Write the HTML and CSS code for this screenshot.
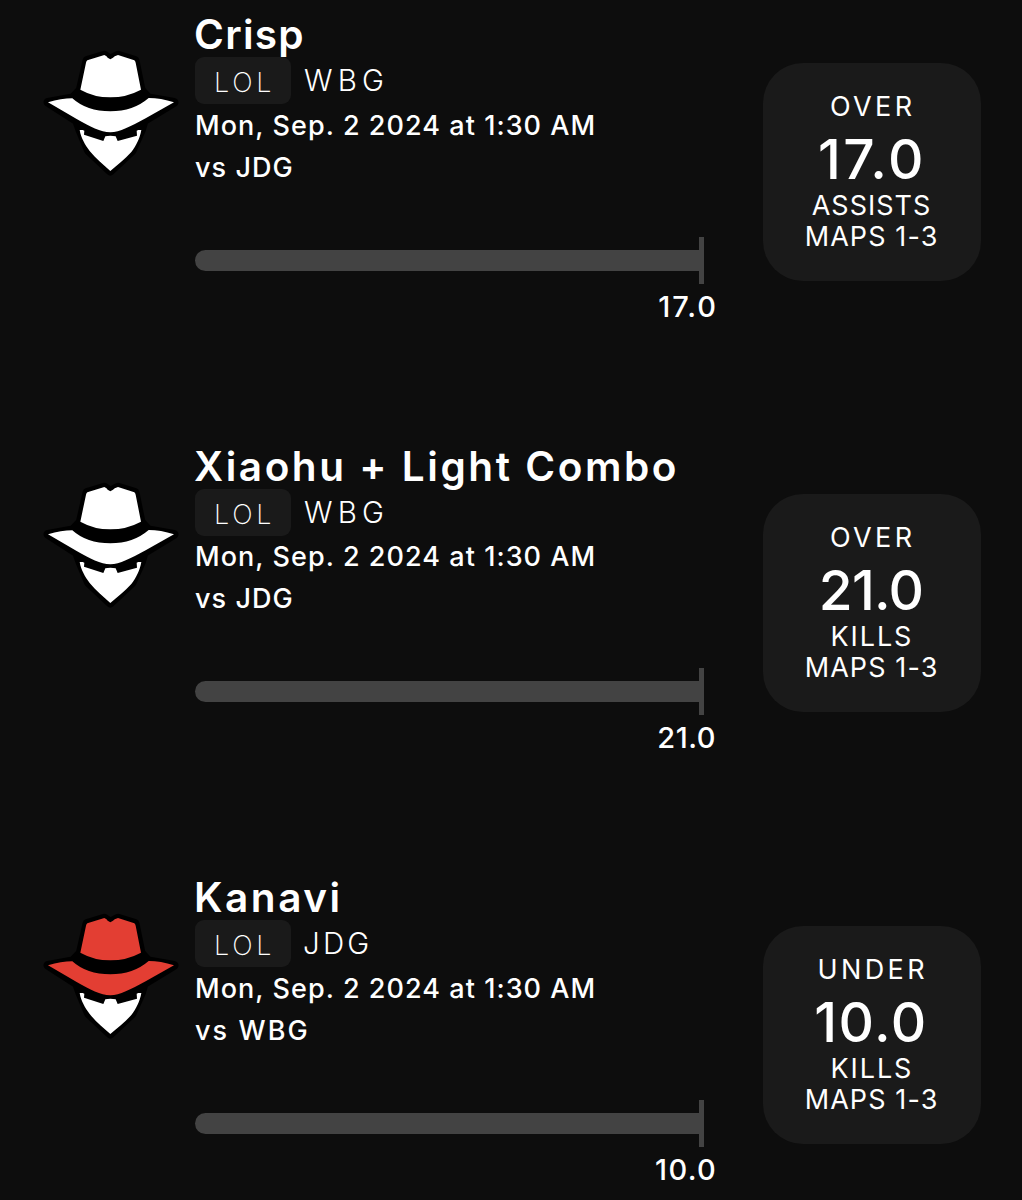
FILE: index.html
```html
<!DOCTYPE html>
<html lang="en">
<head>
    <meta charset="UTF-8">
    <meta name="viewport" content="width=device-width, initial-scale=1.0">
    <title>Picks</title>
    <link rel="stylesheet" href="styles.css">
</head>
<body>
    <svg class="defs" width="0" height="0">
        <symbol id="bandit" viewBox="0 0 480 450">
            <path class="outline" d="M223 46L171 62L151 150L128 174L54 187L140 242L150 270L176 332L241 393L306 332L334 270L342 242L432 187L355 174L333 150L315 62L264 46L241 58Z"/>
            <path class="hat" d="M223 45Q231 48 233 53L241 58L249 53Q252 48 264 45L313 61Q316 63 317 68L333 149Q290 172 241 172Q192 172 151 149L168 68Q169 63 172 61Z"/>
            <path class="hat" d="M54 187Q94 175 127 175Q170 214 241 214Q310 214 356 174Q392 174 432 187L347 235C300 260 270 277 241 277C212 277 180 259 140 237Z"/>
            <path class="mask" d="M149 270H158L163 272L162 284L220 303L226 289L241 287L257 289L263 303L321 287L320 272L325 270H334C330 294 318 318 304 336C284 359 262 374 241 393C220 374 198 357 179 333C165 314 153 294 149 270Z"/>
        </symbol>
    </svg>

    <main class="picks">
        <section class="pick">
            <svg class="avatar"><use href="#bandit"/></svg>
            <div class="info">
                <h2 class="name short">Crisp</h2>
                <div class="team-row">
                    <span class="league">LOL</span>
                    <span class="team wbg">WBG</span>
                </div>
                <p class="line">Mon, Sep. 2 2024 at 1:30 AM</p>
                <p class="line">vs JDG</p>
                <div class="progress">
                    <div class="bar"></div>
                    <div class="tick"></div>
                </div>
                <p class="target n17">17.0</p>
            </div>
            <div class="card">
                <span class="side">OVER</span>
                <span class="number n17">17.0</span>
                <span class="stat assists">ASSISTS</span>
                <span class="stat maps">MAPS 1-3</span>
            </div>
        </section>

        <section class="pick">
            <svg class="avatar"><use href="#bandit"/></svg>
            <div class="info">
                <h2 class="name">Xiaohu + Light Combo</h2>
                <div class="team-row">
                    <span class="league">LOL</span>
                    <span class="team wbg">WBG</span>
                </div>
                <p class="line">Mon, Sep. 2 2024 at 1:30 AM</p>
                <p class="line">vs JDG</p>
                <div class="progress">
                    <div class="bar"></div>
                    <div class="tick"></div>
                </div>
                <p class="target n21">21.0</p>
            </div>
            <div class="card">
                <span class="side">OVER</span>
                <span class="number n21">21.0</span>
                <span class="stat">KILLS</span>
                <span class="stat maps">MAPS 1-3</span>
            </div>
        </section>

        <section class="pick">
            <svg class="avatar red"><use href="#bandit"/></svg>
            <div class="info">
                <h2 class="name">Kanavi</h2>
                <div class="team-row">
                    <span class="league">LOL</span>
                    <span class="team">JDG</span>
                </div>
                <p class="line">Mon, Sep. 2 2024 at 1:30 AM</p>
                <p class="line vs-wbg">vs WBG</p>
                <div class="progress">
                    <div class="bar"></div>
                    <div class="tick"></div>
                </div>
                <p class="target">10.0</p>
            </div>
            <div class="card">
                <span class="side">UNDER</span>
                <span class="number">10.0</span>
                <span class="stat">KILLS</span>
                <span class="stat maps">MAPS 1-3</span>
            </div>
        </section>
    </main>
</body>
</html>
```
FILE: styles.css
```css
* {
    margin: 0;
    padding: 0;
    box-sizing: border-box;
}

body {
    background: #0d0d0d;
    color: #fff;
    font-family: 'Inter', sans-serif;
    overflow: hidden;
}

.defs {
    display: block;
}

.picks {
    height: 1200px;
    overflow: hidden;
}

.pick {
    display: flex;
    align-items: flex-start;
    height: 431.5px;
    padding-left: 30px;
}

/* avatar */
.avatar {
    width: 160px;
    height: 150px;
    margin-top: 40px;
    margin-right: 5px;
    flex-shrink: 0;
    color: #fff;
}

.avatar.red {
    color: #e33e33;
}

.outline {
    fill: #000;
    stroke: #000;
    stroke-width: 27;
    stroke-linejoin: round;
}

.hat {
    fill: currentColor;
}

.mask {
    fill: #fff;
}

/* player info */
.info {
    width: 521px;
    padding-top: 13px;
    flex-shrink: 0;
}

.name {
    margin-left: -1px;
    font-size: 40.5px;
    font-weight: 600;
    line-height: 44px;
    letter-spacing: 2.55px;
    white-space: nowrap;
}

.name.short {
    letter-spacing: 1.3px;
}

.team-row {
    display: flex;
    gap: 13px;
    height: 47px;
    margin-bottom: 0.6px;
}

.league {
    width: 96px;
    padding: 5px 0 0 19px;
    border-radius: 9px;
    background: #1a1a1a;
    font-size: 27px;
    font-weight: 200;
    line-height: 42px;
    letter-spacing: 3.7px;
}

.team {
    margin-left: -1px;
    font-size: 29.5px;
    font-weight: 300;
    line-height: 46px;
    letter-spacing: 3.2px;
}

.team.wbg {
    margin-left: 0;
    letter-spacing: 5.2px;
}

.line {
    font-size: 27px;
    font-weight: 450;
    line-height: 42px;
    letter-spacing: 1.05px;
}

.line.vs-wbg {
    letter-spacing: 2.1px;
}

.progress {
    display: flex;
    align-items: center;
    margin-top: 48px;
    height: 47px;
}

.bar {
    width: 504px;
    height: 21px;
    border-radius: 10.5px 0 0 10.5px;
    background: #434343;
}

.tick {
    width: 5px;
    height: 47px;
    background: #434343;
}

.target {
    margin-top: 5px;
    margin-right: -1px;
    font-size: 29px;
    font-weight: 450;
    line-height: 36px;
    letter-spacing: 1.3px;
    text-align: right;
}

.target.n17 {
    margin-right: -2px;
    letter-spacing: 2px;
}

.target.n21 {
    margin-right: 0;
    letter-spacing: 0.5px;
}

/* over / under card */
.card {
    display: flex;
    flex-direction: column;
    align-items: center;
    width: 218px;
    height: 218px;
    margin-top: 62.5px;
    margin-left: 47px;
    padding-top: 28px;
    padding-right: 2px;
    border-radius: 40px;
    background: #1a1a1a;
    flex-shrink: 0;
}

.side,
.stat {
    font-size: 27px;
    line-height: 31px;
}

.side {
    letter-spacing: 3.4px;
    margin-right: -3.4px;
}

.stat {
    letter-spacing: 1.9px;
    margin-right: -1.9px;
}

.stat.assists {
    letter-spacing: 1px;
    margin-right: -1px;
}

.stat.maps {
    letter-spacing: 1.1px;
    margin-right: -1.1px;
}

.number {
    margin: 7px 0 1px;
    font-size: 55px;
    font-weight: 500;
    line-height: 60px;
    letter-spacing: 1.5px;
}

.number.n17 {
    margin-right: -2px;
    letter-spacing: 2.5px;
}

.number.n21 {
    letter-spacing: -0.7px;
}
```
